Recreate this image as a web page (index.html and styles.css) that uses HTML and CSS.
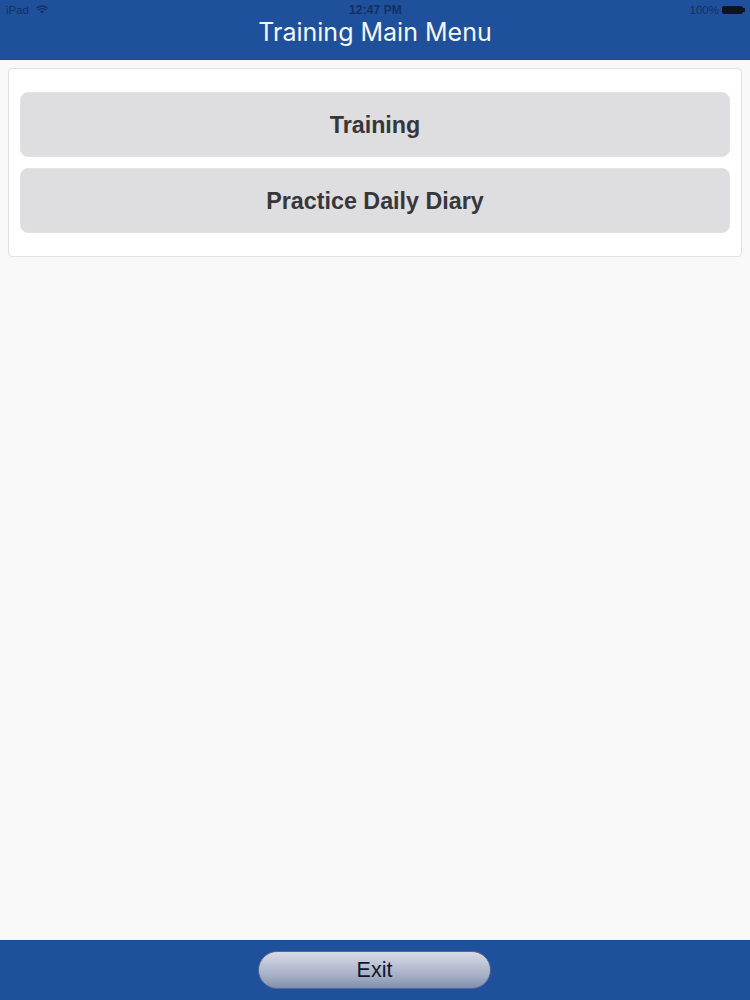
FILE: index.html
```html
<!DOCTYPE html>
<html lang="en">
<head>
<meta charset="utf-8">
<title>Training Main Menu</title>
<link rel="stylesheet" href="styles.css">
</head>
<body>
<div class="app">
  <header class="header">
    <div class="status">
      <div class="status-left">
        <span>iPad</span>
        <svg class="wifi" viewBox="0 0 12 9" width="12" height="9"><path d="M0.6 3.2a7.8 7.8 0 0 1 10.8 0" fill="none" stroke="#13305f" stroke-width="1.3"/><path d="M2.4 5a5.2 5.2 0 0 1 7.2 0" fill="none" stroke="#13305f" stroke-width="1.3"/><path d="M4.1 6.6a2.6 2.6 0 0 1 3.8 0L6 8.6Z" fill="#13305f"/></svg>
      </div>
      <div class="status-time">12:47 PM</div>
      <div class="status-right">
        <span>100%</span>
        <span class="battery"></span>
        <span class="battery-tip"></span>
      </div>
    </div>
    <h1 class="title">Training Main Menu</h1>
  </header>
  <main class="main">
    <section class="card">
      <button class="menu-btn">Training</button>
      <button class="menu-btn">Practice Daily Diary</button>
    </section>
  </main>
  <footer class="footer">
    <button class="exit-btn">Exit</button>
  </footer>
</div>
</body>
</html>
```

FILE: styles.css
```css
* { box-sizing: border-box; }
html, body { margin: 0; padding: 0; }
body { font-family: "Liberation Sans", Arial, sans-serif; }
.app {
  width: 750px;
  height: 1000px;
  display: flex;
  flex-direction: column;
  background: #faf9f9;
}
.header {
  height: 60px;
  background: #1f509b;
  flex: none;
  border-bottom: 1px solid #1c4a90;
}
.status {
  height: 19px;
  padding: 0 5px 0 6px;
  display: grid;
  grid-template-columns: 1fr auto 1fr;
  align-items: center;
  font-size: 11.5px;
  color: #13305f;
}
.status-left { display: flex; align-items: center; gap: 7px; }
.wifi { display: block; }
.status-time { font-weight: bold; color: #12305f; font-size: 12px; letter-spacing: 0.1px; }
.status-right { display: flex; align-items: center; justify-content: flex-end; }
.battery { width: 21px; height: 8px; background: #0c1424; border-radius: 2px; margin-left: 3px; }
.battery-tip { width: 2px; height: 4px; background: #0c1424; }
.title {
  margin: 0;
  text-align: center;
  color: #f4f7fb;
  font-family: Inter, "Noto Sans", sans-serif;
  font-weight: 400;
  font-size: 25px;
  line-height: 26px;
}
.main { flex: 1; padding: 8px 8px 0; }
.card {
  height: 189px;
  background: #fff;
  border: 1px solid #e2e1e1;
  border-radius: 4px;
  padding: 23px 11px 0;
  display: flex;
  flex-direction: column;
  gap: 11px;
}
.menu-btn {
  height: 65px;
  border: 1px solid #e3e2e4;
  border-radius: 8px;
  background: #dedde0;
  color: #37363a;
  font-family: "Liberation Sans", Arial, sans-serif;
  font-weight: bold;
  font-size: 23.3px;
  padding: 2px 0 0;
}
.footer {
  height: 60px;
  flex: none;
  background: #1f509b;
  border-top: 1px solid #1c4a8e;
  display: flex;
  justify-content: center;
  padding: 10px 1px 0 0;
}
.exit-btn {
  width: 233px;
  height: 38px;
  border-radius: 19px;
  border: 1px solid #56698f;
  background: linear-gradient(#d8dbe6 0%, #c2c7d8 30%, #a2abc3 70%, #8090b0 100%);
  color: #10162a;
  font-family: "Liberation Sans", Arial, sans-serif;
  font-size: 21.5px;
  padding: 0;
}
```
